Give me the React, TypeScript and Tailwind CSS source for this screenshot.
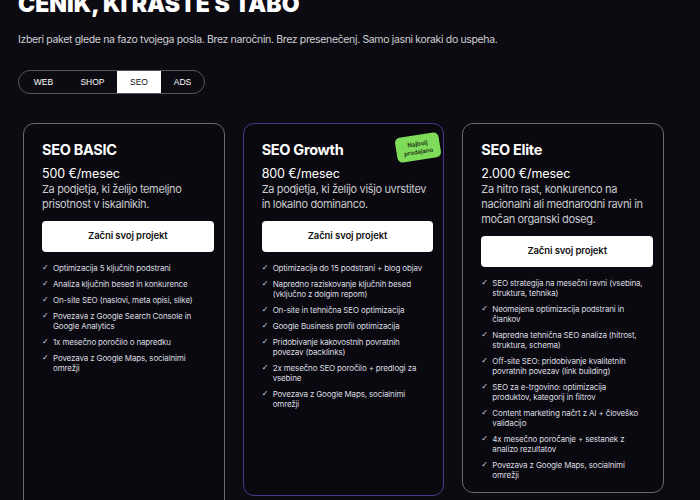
import React from "react";

type Plan = {
  name: string;
  price: string;
  desc: string[];
  features: string[][];
  featured?: boolean;
  h: string;
};

const plans: Plan[] = [
  {
    name: "SEO BASIC",
    price: "500 €/mesec",
    desc: ["Za podjetja, ki želijo temeljno", "prisotnost v iskalnikih."],
    features: [
      ["Optimizacija 5 ključnih podstrani"],
      ["Analiza ključnih besed in konkurence"],
      ["On-site SEO (naslovi, meta opisi, slike)"],
      ["Povezava z Google Search Console in", "Google Analytics"],
      ["1x mesečno poročilo o napredku"],
      ["Povezava z Google Maps, socialnimi", "omrežji"],
    ],
    h: "h-[392px]",
  },
  {
    name: "SEO Growth",
    price: "800 €/mesec",
    desc: ["Za podjetja, ki želijo višjo uvrstitev", "in lokalno dominanco."],
    features: [
      ["Optimizacija do 15 podstrani + blog objav"],
      ["Napredno raziskovanje ključnih besed", "(vključno z dolgim repom)"],
      ["On-site in tehnična SEO optimizacija"],
      ["Google Business profil optimizacija"],
      ["Pridobivanje kakovostnih povratnih", "povezav (backlinks)"],
      ["2x mesečno SEO poročilo + predlogi za", "vsebine"],
      ["Povezava z Google Maps, socialnimi", "omrežji"],
    ],
    featured: true,
    h: "h-[373px]",
  },
  {
    name: "SEO Elite",
    price: "2.000 €/mesec",
    desc: ["Za hitro rast, konkurenco na", "nacionalni ali mednarodni ravni in", "močan organski doseg."],
    features: [
      ["SEO strategija na mesečni ravni (vsebina,", "struktura, tehnika)"],
      ["Neomejena optimizacija podstrani in", "člankov"],
      ["Napredna tehnična SEO analiza (hitrost,", "struktura, schema)"],
      ["Off-site SEO: pridobivanje kvalitetnih", "povratnih povezav (link building)"],
      ["SEO za e-trgovino: optimizacija", "produktov, kategorij in filtrov"],
      ["Content marketing načrt z AI + človeško", "validacijo"],
      ["4x mesečno poročanje + sestanek z", "analizo rezultatov"],
      ["Povezava z Google Maps, socialnimi", "omrežji"],
    ],
    h: "h-[370px]",
  },
];

function Card({ p }: { p: Plan }) {
  return (
    <div
      className={`relative ${p.h} rounded-[11px] border bg-[#0a090f] pl-[18px] pr-[10px] pt-[17px] ${
        p.featured ? "border-[#4b3a8c]" : "border-[#6a6a70]"
      }`}
    >
      {p.featured && (
        <div className="absolute right-[3px] top-[11px] flex h-[25px] w-[44px] -rotate-[9deg] items-center justify-center rounded-[5px] bg-[#7fdb5a] text-center text-[6px] font-semibold leading-[7.5px] text-[#1a2a10]">
          Najbolj
          <br />
          prodajano
        </div>
      )}
      <h3 className="whitespace-nowrap text-[14.5px] font-bold leading-[18px] tracking-[-0.3px] text-white">{p.name}</h3>
      <div className="mt-[7px] whitespace-nowrap text-[12.5px] leading-[16px] tracking-[-0.1px] text-white">{p.price}</div>
      <div className="text-[11px] leading-[15px] tracking-[-0.35px] text-[#c9c9ce]">
        {p.desc.map((d, i) => (
          <div key={i} className="whitespace-nowrap">
            {d}
          </div>
        ))}
      </div>
      <button className="mt-[9px] flex h-[31px] w-full items-center justify-center rounded-[4px] bg-white text-[9.5px] font-semibold tracking-[-0.1px] text-[#111]">
        Začni svoj projekt
      </button>
      <ul className="mt-[11px] flex flex-col gap-[6px]">
        {p.features.map((f, i) => (
          <li key={i} className="flex text-[8px] leading-[10px] tracking-[-0.15px] text-[#dcdce0]">
            <span className="w-[11px] shrink-0 font-['DejaVu_Sans',sans-serif] text-[8px]">✓</span>
            <span>
              {f.map((l, j) => (
                <div key={j} className="whitespace-nowrap">
                  {l}
                </div>
              ))}
            </span>
          </li>
        ))}
      </ul>
    </div>
  );
}

export default function App() {
  const tabs = [
    { t: "WEB", w: "w-[49px]" },
    { t: "SHOP", w: "w-[49px]" },
    { t: "SEO", w: "w-[44px]" },
    { t: "ADS", w: "flex-1" },
  ];
  return (
    <div className="h-[500px] w-[700px] overflow-hidden bg-[#0c0b12] font-['Inter',sans-serif]">
      <div className="px-[18px]">
        <h1 className="-mt-[7px] whitespace-nowrap text-[23px] font-black uppercase leading-none text-white">
          Cenik, ki raste s tabo
        </h1>
        <p className="mt-[16px] whitespace-nowrap text-[10.5px] leading-[16px] tracking-[-0.35px] text-[#cfcfd4]">
          Izberi paket glede na fazo tvojega posla. Brez naročnin. Brez presenečenj. Samo jasni koraki do uspeha.
        </p>
        <div className="mt-[22px] flex h-[24px] w-[187px] items-stretch overflow-hidden rounded-full border border-[#55555c] font-['Liberation_Sans',sans-serif]">
          {tabs.map((t) => (
            <div
              key={t.t}
              className={`${t.w} flex items-center justify-center text-[8.5px] ${
                t.t === "SEO" ? "bg-white text-[#111]" : "text-white"
              }`}
            >
              {t.t}
            </div>
          ))}
        </div>
        <div className="ml-[5px] mt-[29px] grid w-[641px] grid-cols-3 items-start gap-[18px]">
          {plans.map((p) => (
            <Card key={p.name} p={p} />
          ))}
        </div>
      </div>
    </div>
  );
}
